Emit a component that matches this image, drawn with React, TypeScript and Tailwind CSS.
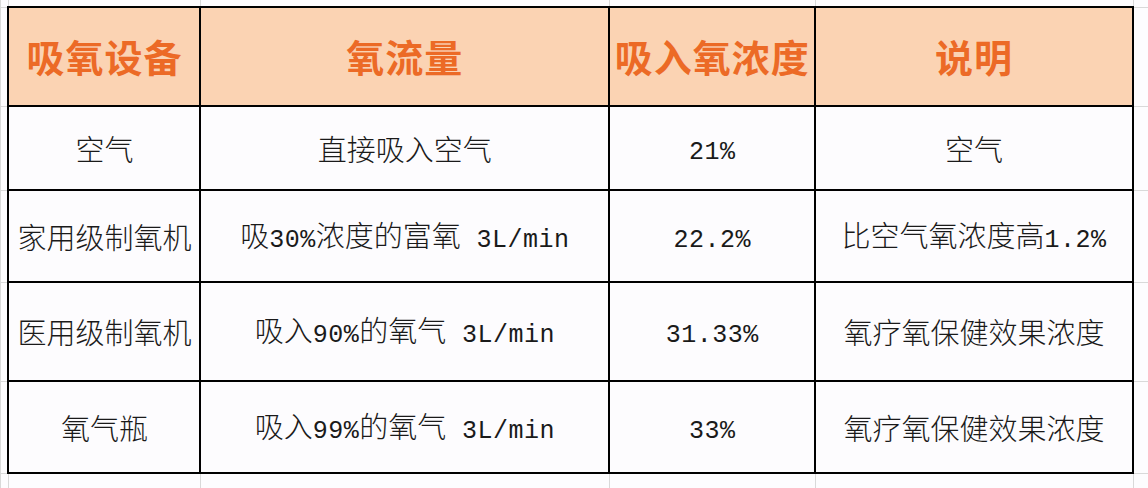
import React from 'react';

const headers = ['吸氧设备', '氧流量', '吸入氧浓度', '说明'];

const rows: { h: string; cells: string[] }[] = [
  { h: 'h-[84px]', cells: ['空气', '直接吸入空气', '21%', '空气'] },
  { h: 'h-[92px]', cells: ['家用级制氧机', '吸30%浓度的富氧 3L/min', '22.2%', '比空气氧浓度高1.2%'] },
  { h: 'h-[99px]', cells: ['医用级制氧机', '吸入90%的氧气 3L/min', '31.33%', '氧疗氧保健效果浓度'] },
  { h: 'h-[92px]', cells: ['氧气瓶', '吸入99%的氧气 3L/min', '33%', '氧疗氧保健效果浓度'] },
];

// ascii runs use a half-width mono face, like the sheet's SimSun digits
function Mixed({ text }: { text: string }) {
  const parts = text.split(/([\x20-\x7e]+)/).filter(Boolean);
  return (
    <>
      {parts.map((p, i) =>
        /^[\x20-\x7e]+$/.test(p) ? (
          <span key={i} className="font-['Liberation_Mono',monospace] font-normal text-[25px] tracking-[0.5px] whitespace-pre">
            {p}
          </span>
        ) : (
          <span key={i}>{p}</span>
        )
      )}
    </>
  );
}

const grid = 'border border-[#d9d9d9]';
const cell = 'border-2 border-black';

export default function App() {
  return (
    <div className="w-[1148px] h-[488px] overflow-hidden bg-[#fdfcfe] font-['Noto_Sans_CJK_SC',sans-serif]">
      <table className="table-fixed border-collapse">
        <colgroup>
          <col className="w-[8px]" />
          <col className="w-[192px]" />
          <col className="w-[409px]" />
          <col className="w-[206px]" />
          <col className="w-[318px]" />
          <col className="w-[15px]" />
        </colgroup>
        <tbody>
          {/* sheet gridlines above the table */}
          <tr className="h-[7px]">
            <td className={`${grid} border-t-0`} />
            {headers.map((t) => (
              <td key={t} className={`${grid} border-t-0`} />
            ))}
            <td className={`${grid} border-t-0 border-r-0`} />
          </tr>

          <tr className="h-[99px]">
            <td className={grid} />
            {headers.map((t) => (
              <td key={t} className={`${cell} bg-[#fbd3b3] text-center p-0`}>
                <span className="text-[38px] font-bold text-[#ec6a26] tracking-[1px] leading-none">{t}</span>
              </td>
            ))}
            <td className={`${grid} border-r-0`} />
          </tr>

          {rows.map((r, i) => (
            <tr key={i} className={r.h}>
              <td className={grid} />
              {r.cells.map((c, j) => (
                <td
                  key={j}
                  className={`${cell} text-center p-0 text-[29px] font-light text-[#1a1a1a] leading-none whitespace-nowrap`}
                >
                  <Mixed text={c} />
                </td>
              ))}
              <td className={`${grid} border-r-0`} />
            </tr>
          ))}

          <tr className="h-[20px]">
            <td className={`${grid} border-b-0`} />
            {headers.map((t) => (
              <td key={t} className={`${grid} border-b-0`} />
            ))}
            <td className={`${grid} border-b-0 border-r-0`} />
          </tr>
        </tbody>
      </table>
    </div>
  );
}
